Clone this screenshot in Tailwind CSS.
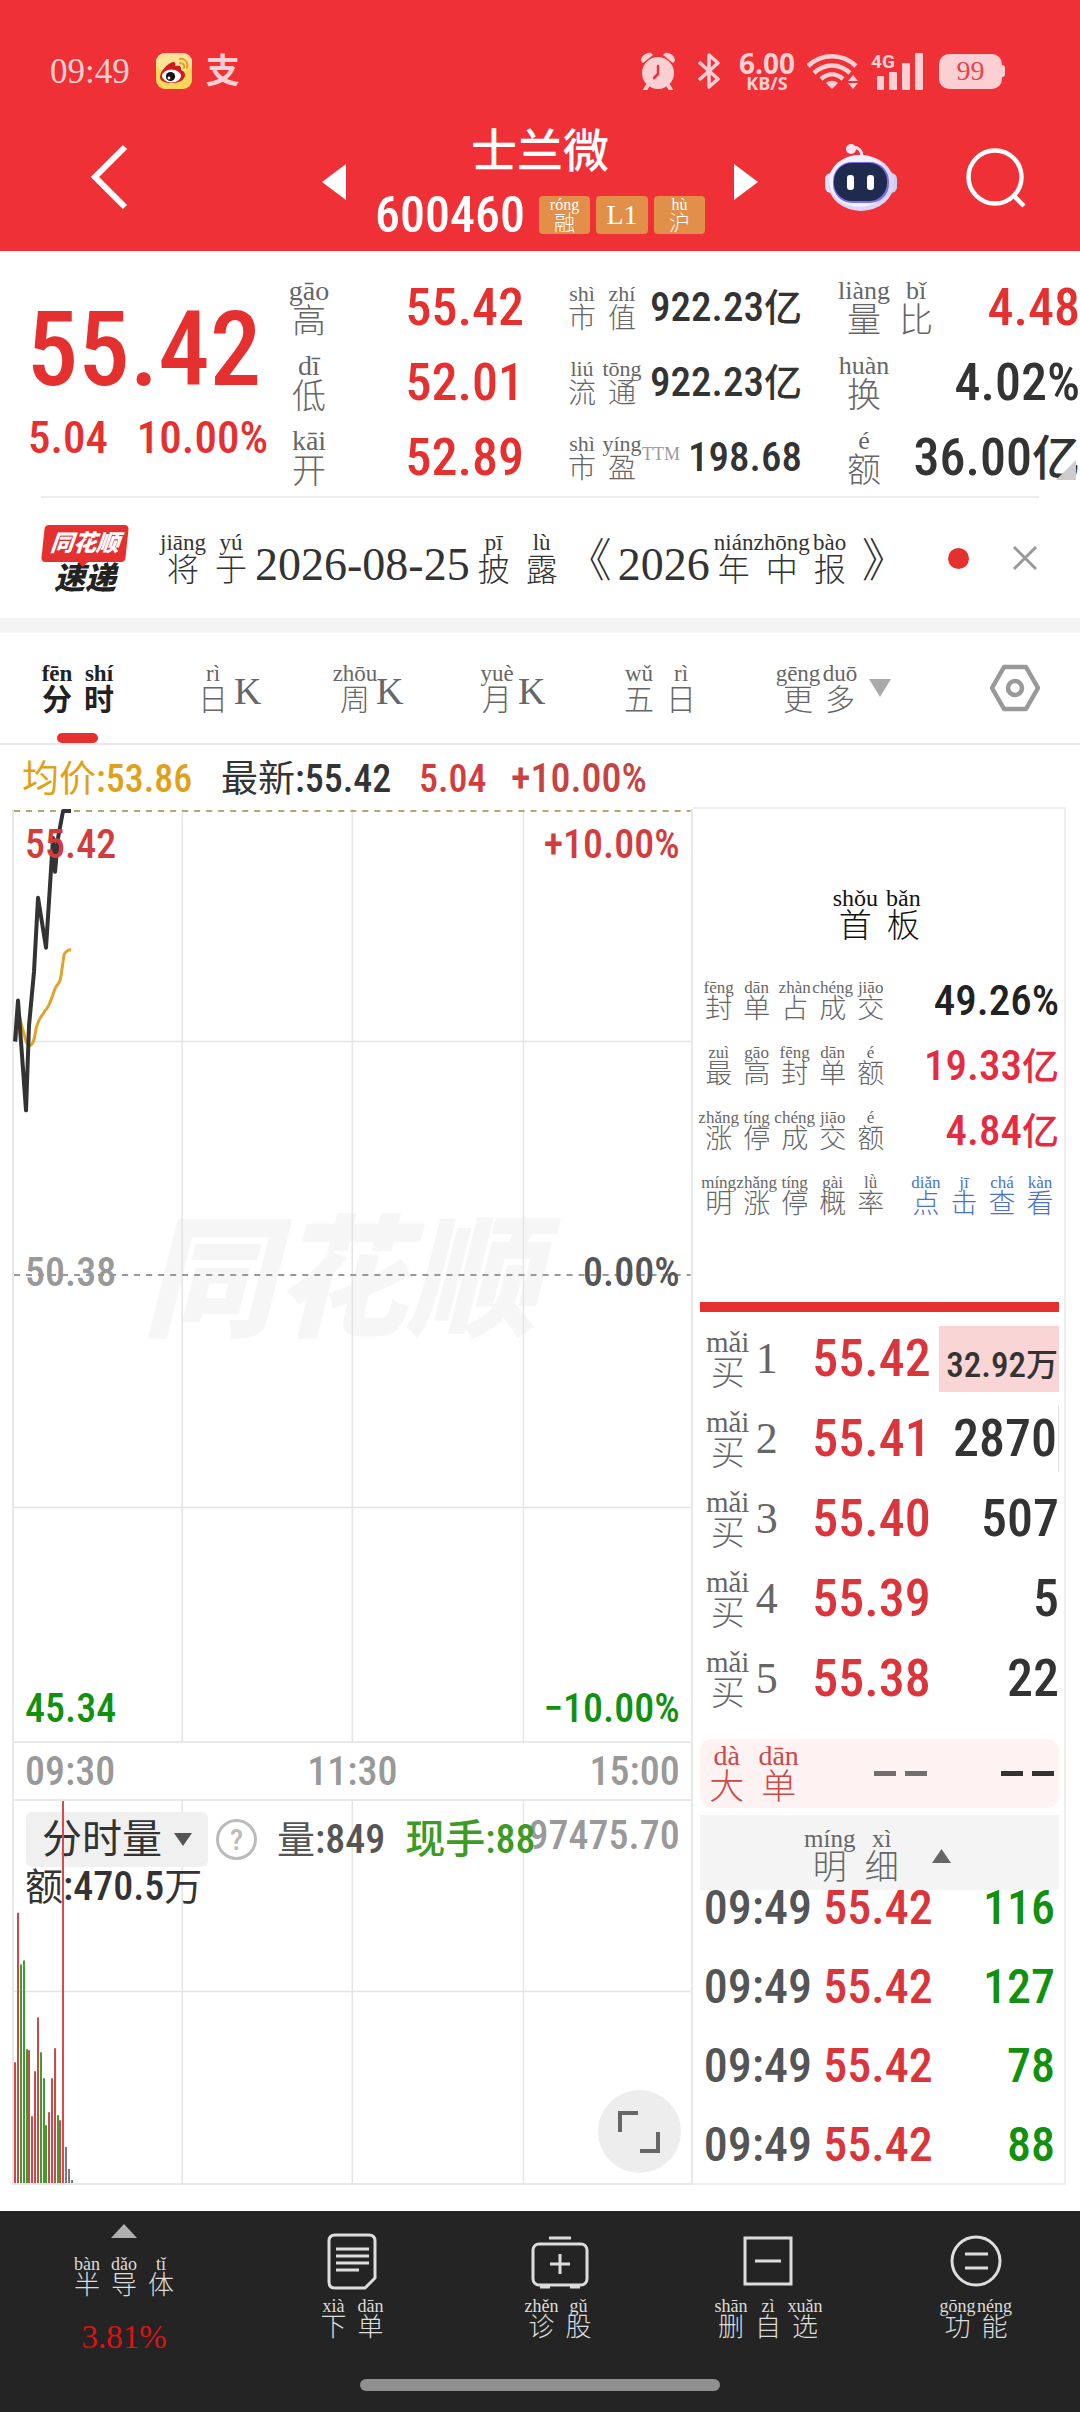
<!DOCTYPE html>
<html lang="zh-CN">
<head>
    <meta charset="UTF-8">
    <meta name="viewport" content="width=device-width, initial-scale=1.0">
    <title>士兰微 600460</title>
    <script src="https://cdn.jsdelivr.net/npm/@tailwindcss/browser@4"></script>
</head>
<body class="bg-white text-[#333] font-['Roboto_Condensed','Liberation_Sans_Narrow',Roboto,'Noto_Sans_CJK_SC',sans-serif] font-medium leading-none [&_ruby]:inline-flex [&_ruby]:flex-col-reverse [&_ruby]:items-center [&_ruby]:leading-none [&_ruby]:font-light [&_ruby]:font-['Liberation_Serif','Noto_Sans_CJK_SC',serif] [&_rt]:leading-none [&_rt]:whitespace-nowrap">

    <!-- 顶部 -->
    <header class="bg-[#f03037] text-white h-[251px]">
        <div class="flex items-center justify-between h-[142px] pl-[50px] pr-[75px] text-[#fcd0d2]">
            <div class="flex items-center">
                <span class="font-['Liberation_Serif',serif] font-light text-[35px]">09:49</span>
                <svg class="w-9 h-9 ml-[26px]" viewBox="0 0 36 36">
                    <rect width="36" height="36" rx="9" fill="#fdd75a"/>
                    <rect width="36" height="18" rx="9" fill="#fde39a"/>
                    <path d="M4 24c0-6 8-14 13-15 2 0 3 1 2 4 4-1 7 0 6 4 3 1 4 3 4 5 0 5-6 8-13 8S4 28 4 24z" fill="#d7191c"/>
                    <ellipse cx="15.500" cy="23" rx="9.500" ry="6.500" fill="#fff"/>
                    <circle cx="14.500" cy="23.500" r="4.600" fill="#111"/>
                    <circle cx="13" cy="25" r="1.400" fill="#fff"/>
                    <path d="M24 6c5-1 9 4 7 9M24 10c3 0 5 2 4 5" fill="none" stroke="#e89c1c" stroke-width="2" stroke-linecap="round"/>
                </svg>
                <span class="font-bold text-[34px] ml-[14px]">支</span>
            </div>
            <div class="flex items-center">
                <svg class="w-9 h-[38px]" viewBox="0 0 36 38" fill="currentColor">
                    <path d="M1 9C1 4 6 0 11 1L13 3 3 11zM35 9c0-5-5-9-10-8l-2 2 10 8z"/>
                    <circle cx="18" cy="21" r="16"/>
                    <path d="M8 33l-3 5M28 33l3 5" stroke="currentColor" stroke-width="4" stroke-linecap="round"/>
                    <path d="M18 14v8l-4 4" fill="none" stroke="#f03037" stroke-width="2.500" stroke-linecap="round"/>
                </svg>
                <svg class="w-[22px] h-9 ml-[22px]" viewBox="0 0 22 36" fill="none" stroke="currentColor" stroke-width="3.500" stroke-linejoin="round">
                    <path d="M1 9l19 17-9 8V2l9 8L1 27"/>
                </svg>
                <div class="flex flex-col items-center ml-[16px] w-[62px] font-['Open_Sans',sans-serif] font-bold">
                    <span class="text-[28px] leading-[24px]">6.00</span>
                    <span class="text-[18px] leading-[16px]">KB/S</span>
                </div>
                <svg class="w-[51px] h-[38px] ml-[9px]" viewBox="0 0 51 38" fill="none" stroke="currentColor" stroke-width="4.500">
                    <path d="M1 14c14-13 34-13 48 0M7 21c11-10 25-10 36 0M14 27c7-6 15-6 22 0"/>
                    <path d="M25 37l-6-6c3-3 9-3 12 0zM46 23l5 6h-10zM46 37l5-6h-10z" fill="currentColor" stroke="none"/>
                </svg>
                <svg class="w-[52px] h-[38px] ml-[13px]" viewBox="0 0 52 38" fill="currentColor">
                    <text x="0" y="16" font-family="Roboto" font-weight="700" font-size="19">4G</text>
                    <rect x="6" y="24" width="7" height="14" rx="1"/>
                    <rect x="18" y="20" width="8" height="18" rx="1"/>
                    <rect x="31" y="11" width="8" height="27" rx="1"/>
                    <rect x="44" y="1" width="8" height="37" rx="1"/>
                </svg>
                <div class="flex items-center ml-4">
                    <span class="flex items-center justify-center w-[63px] h-[35px] rounded-[10px] bg-[#fcd0d2] text-[#e0454b] font-['Liberation_Serif',serif] text-[28px]">99</span>
                    <span class="w-[3px] h-3 rounded-r bg-[#fcd0d2]"></span>
                </div>
            </div>
        </div>

        <div class="grid grid-cols-[310px_1fr_310px]">
            <div class="pl-[88px] pt-px">
                <button type="button" aria-label="返回" class="block">
                    <svg class="w-10 h-[68px]" viewBox="0 0 40 68" fill="none" stroke="#fff" stroke-width="6"><path d="M37 4L7 34l30 30"/></svg>
                </button>
            </div>
            <div class="flex items-center justify-between h-[112px] -mt-[16px] px-3">
                <button type="button" aria-label="上一只"><svg class="w-6 h-9" viewBox="0 0 24 36" fill="#fff"><path d="M24 0v36L0 18z"/></svg></button>
                <div class="flex flex-col items-center">
                    <h1 class="text-[46px] leading-[50px]">士兰微</h1>
                    <div class="flex items-center gap-[6px] h-[46px] mt-4">
                        <span class="text-[50px] mr-2">600460</span>
                        <span class="flex items-center justify-center w-[51px] h-[38px] rounded-sm bg-[#e28f49]"><ruby class="text-[21px]">融<rt class="text-[16px]">róng</rt></ruby></span>
                        <span class="flex items-center justify-center w-[52px] h-[38px] rounded-sm bg-[#e28f49] font-['Liberation_Serif',serif] text-[28px]">L1</span>
                        <span class="flex items-center justify-center w-[51px] h-[38px] rounded-sm bg-[#e28f49]"><ruby class="text-[21px]">沪<rt class="text-[16px]">hù</rt></ruby></span>
                    </div>
                </div>
                <button type="button" aria-label="下一只"><svg class="w-6 h-9" viewBox="0 0 24 36" fill="#fff"><path d="M0 0v36l24-18z"/></svg></button>
            </div>
            <div class="flex items-start justify-between pl-[54px] pr-[54px]">
                <button type="button" aria-label="智能助手">
                    <svg class="w-[74px] h-[70px]" viewBox="0 0 74 70">
                        <path d="M27 6c8-2 11 3 11 9" fill="none" stroke="#f6dfff" stroke-width="3"/>
                        <circle cx="27" cy="7" r="5" fill="#fbe6f4"/>
                        <rect x="1" y="31" width="12" height="20" rx="6" fill="#e4e2fb"/>
                        <rect x="61" y="31" width="12" height="20" rx="6" fill="#cfcdf7"/>
                        <ellipse cx="37" cy="41" rx="33" ry="28" fill="#d9d6f8"/>
                        <ellipse cx="35" cy="39" rx="30" ry="26" fill="#f3f1ff"/>
                        <rect x="9" y="20" width="56" height="41" rx="19" fill="#7a6cf0"/>
                        <rect x="10" y="21" width="53" height="38" rx="18" fill="#1e2a4e"/>
                        <rect x="23" y="33" width="7" height="15" rx="3" fill="#fff"/>
                        <rect x="43" y="33" width="7" height="15" rx="3" fill="#fff"/>
                    </svg>
                </button>
                <button type="button" aria-label="搜索" class="pt-[6px]">
                    <svg class="w-[60px] h-[60px]" viewBox="0 0 60 60" fill="none" stroke="#fff" stroke-width="4.500"><circle cx="29" cy="29" r="26.500"/><path d="M48 48l10 10"/></svg>
                </button>
            </div>
        </div>
    </header>

    <!-- 行情 -->
    <section class="relative grid grid-cols-[280fr_270fr_270fr_260fr] pt-[19px] h-[245px] text-[#333]">
        <div class="flex flex-col items-center text-[#e53030] pl-2 pt-[25px]">
            <strong class="text-[103px] leading-[110px] font-medium">55.42</strong>
            <p class="flex justify-between w-full pl-5 pr-3 mt-[6px] text-[45px] leading-[54px]"><span>5.04</span><span>10.00%</span></p>
        </div>
        <dl class="pl-2 pr-[26px] [&>div]:flex [&>div]:h-[75px] [&>div]:items-center [&>div]:justify-between [&_dt]:flex [&_dt]:text-[#666] [&_ruby]:text-[34px] [&_ruby]:w-[42px] [&_rt]:text-[28px] text-[52px] text-[#e53030]">
            <div><dt><ruby>高<rt>gāo</rt></ruby></dt><dd>55.42</dd></div>
            <div><dt><ruby>低<rt>dī</rt></ruby></dt><dd>52.01</dd></div>
            <div><dt><ruby>开<rt>kāi</rt></ruby></dt><dd>52.89</dd></div>
        </dl>
        <dl class="pl-3 pr-[18px] [&>div]:flex [&>div]:h-[75px] [&>div]:items-center [&>div]:justify-between [&_dt]:flex [&_dt]:text-[#666] [&_ruby]:text-[28px] [&_ruby]:w-10 [&_rt]:text-[22px] text-[41px]">
            <div><dt><ruby>市<rt>shì</rt></ruby><ruby>值<rt>zhí</rt></ruby></dt><dd class="whitespace-nowrap">922.23<span class="text-[38px]">亿</span></dd></div>
            <div><dt><ruby>流<rt>liú</rt></ruby><ruby>通<rt>tōng</rt></ruby></dt><dd class="whitespace-nowrap">922.23<span class="text-[38px]">亿</span></dd></div>
            <div><dt><ruby>市<rt>shì</rt></ruby><ruby>盈<rt>yíng</rt></ruby><sup class="top-0 pt-3 text-[18px] leading-none font-['Liberation_Serif',serif] text-[#999]">TTM</sup></dt><dd>198.68</dd></div>
        </dl>
        <dl class="pl-[18px] [&>div]:flex [&>div]:h-[75px] [&>div]:items-center [&>div]:justify-between [&_dt]:flex [&_dt]:text-[#666] [&_ruby]:text-[34px] [&_ruby]:w-[52px] [&_rt]:text-[26px] text-[52px]">
            <div><dt><ruby>量<rt>liàng</rt></ruby><ruby>比<rt>bǐ</rt></ruby></dt><dd class="text-[#e53030]">4.48</dd></div>
            <div><dt><ruby>换<rt>huàn</rt></ruby></dt><dd>4.02%</dd></div>
            <div><dt><ruby>额<rt>é</rt></ruby></dt><dd class="whitespace-nowrap">36.00<span class="text-[48px]">亿</span></dd></div>
        </dl>
        <svg class="absolute right-1 bottom-4 w-5 h-5" viewBox="0 0 20 20"><path d="M20 0v20H0z" fill="#ccc"/></svg>
    </section>

    <!-- 公告 -->
    <section class="flex items-center h-[122px] mx-[41px] border-t-2 border-[#eee] text-[#333]">
        <div class="flex flex-col items-center w-[88px] mt-1 italic font-black">
            <span class="relative flex items-center justify-center w-[84px] h-[37px] rounded-[4px] -skew-x-6 bg-[#e53030] text-white text-[23px]">同花顺<i class="absolute -bottom-[5px] w-0 h-0 border-x-[6px] border-x-transparent border-t-[6px] border-t-[#e53030]"></i></span>
            <span class="text-[31px] leading-[34px] text-[#222]">速递</span>
        </div>
        <a href="#" class="flex items-end ml-[30px] font-['Liberation_Serif','Noto_Sans_CJK_SC',serif] font-light text-[46px] [&_ruby]:text-[32px] [&_ruby]:w-12 [&_rt]:text-[23px]">
            <ruby>将<rt>jiāng</rt></ruby><ruby>于<rt>yú</rt></ruby><span class="leading-[42px]">2026-08-25</span><ruby>披<rt>pī</rt></ruby><ruby>露<rt>lù</rt></ruby><span class="leading-[50px] w-[48px]">《</span><span class="leading-[42px] pl-1">2026</span><ruby>年<rt>nián</rt></ruby><ruby>中<rt>zhōng</rt></ruby><ruby>报<rt>bào</rt></ruby><span class="leading-[50px] w-[54px] text-right">》</span>
        </a>
        <span class="w-[21px] h-[21px] rounded-full bg-[#e53030] ml-auto"></span>
        <button type="button" aria-label="关闭" class="ml-[42px]"><svg class="w-7 h-7" viewBox="0 0 28 28" stroke="#999" stroke-width="3"><path d="M3 3l22 22M25 3L3 25"/></svg></button>
    </section>
    <div class="h-[15px] bg-[#f4f4f4]"></div>

    <!-- 周期 -->
    <nav class="grid grid-cols-[156fr_142fr_142fr_142fr_159fr_213fr_50fr] h-[112px] pl-9 pr-10 border-b-2 border-[#e8e8e8] text-[#666] [&_button]:relative [&_button]:flex [&_button]:h-full [&_button]:items-center [&_ruby]:text-[30px] [&_ruby]:w-[42px] [&_rt]:text-[23px] [&_span]:font-['Liberation_Serif',serif] [&_span]:font-light [&_span]:text-[38px] [&_span]:mt-[6px]">
        <button type="button" class="text-[#222] [&_ruby]:font-bold!"><ruby>分<rt>fēn</rt></ruby><ruby>时<rt>shí</rt></ruby><i class="absolute bottom-0 left-[21px] w-[41px] h-[10px] rounded-full bg-[#e53030]"></i></button>
        <button type="button"><ruby>日<rt>rì</rt></ruby><span>K</span></button>
        <button type="button"><ruby>周<rt>zhōu</rt></ruby><span>K</span></button>
        <button type="button"><ruby>月<rt>yuè</rt></ruby><span>K</span></button>
        <button type="button"><ruby>五<rt>wǔ</rt></ruby><ruby>日<rt>rì</rt></ruby></button>
        <button type="button"><ruby>更<rt>gēng</rt></ruby><ruby>多<rt>duō</rt></ruby><svg class="w-[22px] h-[18px] ml-2" viewBox="0 0 22 18" fill="#aaa"><path d="M0 0h22L11 18z"/></svg></button>
        <button type="button" aria-label="设置"><svg class="w-[50px] h-[50px]" viewBox="0 0 50 50" fill="none" stroke="#999" stroke-width="4.500" stroke-linejoin="round"><path d="M14 4h22l12 21-12 21H14L2 25z"/><circle cx="25" cy="25" r="7"/></svg></button>
    </nav>

    <p class="flex items-center h-[64px] pt-1 pl-[22px] text-[38px] [&>span]:whitespace-nowrap">
        <span class="w-[199px] text-[#dfa11c]"><span class="text-[37px] font-normal">均价</span>:53.86</span>
        <span class="w-[198px]"><span class="text-[37px] font-normal">最新</span>:55.42</span>
        <span class="w-[92px] text-[#d33c3c]">5.04</span>
        <span class="text-[40px] text-[#c94242]">+10.00%</span>
    </p>

    <main class="grid grid-cols-[680fr_373fr] pl-3 pr-[14px]">
        <!-- 分时图 -->
        <section class="border-x-2 border-[#e8e8e8]">
            <div class="relative h-[934px] border-b-2 border-[#e8e8e8] text-[40px]">
                <div class="absolute inset-0 flex items-center justify-center pr-6 pt-3 text-[132px] font-black italic text-[#f6f6f6]">同花顺</div>
                <svg class="absolute inset-0 w-full h-full overflow-visible" viewBox="0 0 676 934" preserveAspectRatio="none" fill="none">
                    <path d="M168 0v934M338 0v934M509 0v934M0 233h676M0 700h676" stroke="#e4e4e4" stroke-width="1.500"/>
                    <path d="M0 2h676" stroke="#b5a86c" stroke-width="2" stroke-dasharray="6 6"/>
                    <path d="M0 467h676" stroke="#999" stroke-width="2" stroke-dasharray="6 6"/>
                    <path d="M2 233l3-28c2 10 3 14 5 20 2 8 3 12 6 12 4-1 5-10 6-17 3-12 5-10 9-18 4-2 7-14 10-22 4-8 5-4 6-13l3-21c2-4 4-5 7-5" stroke="#e0a32c" stroke-width="3"/>
                    <path d="M1 233l3-41 8 110 3-85 5-54 4-74 8 50 7-110 2 34 3-34 5-27h8" stroke="#333" stroke-width="4" stroke-linejoin="round"/>
                </svg>
                <span class="absolute left-[11px] top-[16px] text-[#d33c3c]">55.42</span>
                <span class="absolute right-[11px] top-[16px] text-[#d33c3c]">+10.00%</span>
                <span class="absolute left-[11px] top-[444px] text-[#999]">50.38</span>
                <span class="absolute right-[11px] top-[444px] text-[#555]">0.00%</span>
                <span class="absolute left-[11px] bottom-[12px] text-[#12900f]">45.34</span>
                <span class="absolute right-[11px] bottom-[12px] text-[#12900f]">−10.00%</span>
            </div>
            <div class="flex items-center justify-between h-[56px] pt-[2px] px-[11px] text-[40px] text-[#999]"><span>09:30</span><span>11:30</span><span>15:00</span></div>
            <!-- 分时量 -->
            <div class="relative h-[386px] border-y-2 border-[#e8e8e8] text-[40px]">
                <svg class="absolute inset-0 w-full h-full" viewBox="0 0 676 383" preserveAspectRatio="none" fill="none">
                    <path d="M168 0v383M338 0v383M509 0v383M0 191h676" stroke="#e4e4e4" stroke-width="1.500"/>
                    <g stroke-width="2">
                        <path d="M1 383V262M4 383V112M15 383V250M18 383V316M21 383V271M24 383V217M35 383V312M38 383V278M41 383V248M46 383V320" stroke="#c84a4a"/>
                        <path d="M7 383V164M10 383V160M13 383V249M27 383V252M30 383V278M32 383V325M44 383V315" stroke="#3f9d2f"/>
                        <path d="M52 383v-36M55 383v-14M58 383v-3" stroke="#777"/>
                    </g>
                </svg>
                <span class="absolute right-[11px] top-[15px] text-[#999]">97475.70</span>
                <div class="relative flex items-center pl-3 pt-[11px] whitespace-nowrap">
                    <button type="button" class="flex items-center justify-between w-[182px] h-[55px] pl-4 pr-4 rounded-md bg-[#f0f0f0] text-[40px] font-normal">分时量<svg class="w-[18px] h-[13px]" viewBox="0 0 18 13" fill="#555"><path d="M0 0h18L9 13z"/></svg></button>
                    <button type="button" aria-label="说明" class="flex items-center justify-center w-[41px] h-[41px] ml-2 rounded-full border-3 border-[#bbb] text-[30px] text-[#bbb]">?</button>
                    <span class="ml-5 text-[#555]"><span class="font-normal text-[38px]">量</span>:849</span>
                    <span class="ml-5 text-[#3c9a25]">现手:88</span>
                </div>
                <p class="relative pl-[11px] pt-px leading-[38px]"><span class="font-normal text-[38px]">额</span>:470.5<span class="font-normal text-[38px]">万</span></p>
                <svg class="absolute left-[48px] inset-y-0 w-[2px] h-full" viewBox="0 0 2 10" preserveAspectRatio="none"><path d="M1 0v10" stroke="#d94a4a" stroke-width="2"/></svg>
                <button type="button" aria-label="全屏" class="absolute right-[10px] bottom-[10px] flex items-center justify-center w-[83px] h-[83px] rounded-full bg-[#ededed]">
                    <svg class="w-11 h-11" viewBox="0 0 44 44" fill="none" stroke="#666" stroke-width="4"><path d="M3 22V3h18M41 22v19H23"/></svg>
                </button>
            </div>
        </section>

        <!-- 盘口 -->
        <aside class="border-y-2 border-r-2 border-[#eee] -mt-[2px] pl-[7px] pr-[5px]">
            <h2 class="flex justify-center pt-[77px] text-[#111] [&_ruby]:text-[33px] [&_ruby]:w-12 [&_rt]:text-[24px]"><ruby>首<rt>shǒu</rt></ruby><ruby>板<rt>bǎn</rt></ruby></h2>
            <dl class="mt-[25px] [&>div]:flex [&>div]:items-center [&>div]:justify-between [&>div]:h-[65px] [&_dt]:flex [&_dt]:text-[#666] [&_ruby]:text-[27px] [&_ruby]:w-[38px] [&_rt]:text-[17px] text-[43px] text-[#e52b42] whitespace-nowrap">
                <div><dt><ruby>封<rt>fēng</rt></ruby><ruby>单<rt>dān</rt></ruby><ruby>占<rt>zhàn</rt></ruby><ruby>成<rt>chéng</rt></ruby><ruby>交<rt>jiāo</rt></ruby></dt><dd class="text-[#222]">49.26%</dd></div>
                <div><dt><ruby>最<rt>zuì</rt></ruby><ruby>高<rt>gāo</rt></ruby><ruby>封<rt>fēng</rt></ruby><ruby>单<rt>dān</rt></ruby><ruby>额<rt>é</rt></ruby></dt><dd>19.33<span class="text-[37px]">亿</span></dd></div>
                <div><dt><ruby>涨<rt>zhǎng</rt></ruby><ruby>停<rt>tíng</rt></ruby><ruby>成<rt>chéng</rt></ruby><ruby>交<rt>jiāo</rt></ruby><ruby>额<rt>é</rt></ruby></dt><dd>4.84<span class="text-[37px]">亿</span></dd></div>
                <div><dt><ruby>明<rt>míng</rt></ruby><ruby>涨<rt>zhǎng</rt></ruby><ruby>停<rt>tíng</rt></ruby><ruby>概<rt>gài</rt></ruby><ruby>率<rt>lǜ</rt></ruby></dt><dd><a href="#" class="flex text-[#4a72cc]"><ruby>点<rt>diǎn</rt></ruby><ruby>击<rt>jī</rt></ruby><ruby>查<rt>chá</rt></ruby><ruby>看<rt>kàn</rt></ruby></a></dd></div>
            </dl>
            <div class="h-[10px] mt-[74px] bg-[#e53030]"></div>

            <table class="w-full table-fixed border-separate border-spacing-x-0 border-spacing-y-[14px] text-[52px] [&_tr]:h-[66px] [&_td]:p-0 [&_th]:p-0 [&_td]:text-right [&_th]:font-light [&_th]:text-[#666] [&_ruby]:text-[34px] [&_ruby]:w-[56px] [&_rt]:text-[29px] [&_th>div]:flex [&_th>div]:items-center [&_th>div]:font-['Liberation_Serif',serif] [&_th>div]:text-[44px]">
                <tbody>
                    <tr><th class="w-[84px]"><div><ruby>买<rt>mǎi</rt></ruby>1</div></th><td class="w-[147px] text-[#d9353a]">55.42</td><td><div class="flex items-center justify-end h-[66px] ml-2 pt-3 pr-px bg-[#f9d5d5] text-[35px]">32.92<span class="text-[32px]">万</span></div></td></tr>
                    <tr><th><div><ruby>买<rt>mǎi</rt></ruby>2</div></th><td class="text-[#d9353a]">55.41</td><td><div class="flex items-center justify-end h-[66px] pr-px border-r border-[#ddd]">2870</div></td></tr>
                    <tr><th><div><ruby>买<rt>mǎi</rt></ruby>3</div></th><td class="text-[#d9353a]">55.40</td><td>507</td></tr>
                    <tr><th><div><ruby>买<rt>mǎi</rt></ruby>4</div></th><td class="text-[#d9353a]">55.39</td><td>5</td></tr>
                    <tr><th><div><ruby>买<rt>mǎi</rt></ruby>5</div></th><td class="text-[#d9353a]">55.38</td><td>22</td></tr>
                </tbody>
            </table>

            <div class="flex items-center h-[69px] mt-[13px] rounded-xl bg-[#fef2f2] text-[#cc4a45] [&_ruby]:text-[35px] [&_ruby]:w-[52px] [&_rt]:text-[28px]">
                <ruby class="ml-px">大<rt>dà</rt></ruby><ruby>单<rt>dān</rt></ruby>
                <svg class="w-[54px] h-[5px] ml-auto" viewBox="0 0 54 5" fill="#707070"><path d="M0 0h22v5H0zM31 0h22v5H31z"/></svg>
                <svg class="w-[54px] h-[5px] ml-[73px] mr-1" viewBox="0 0 54 5" fill="#333"><path d="M0 0h22v5H0zM31 0h22v5H31z"/></svg>
            </div>
            <button type="button" class="flex items-center justify-center w-full h-[75px] pt-[6px] pr-1 mt-[7px] bg-[#f4f4f4] text-[#666] [&_ruby]:text-[34px] [&_ruby]:w-[52px] [&_rt]:text-[25px]">
                <ruby>明<rt>míng</rt></ruby><ruby>细<rt>xì</rt></ruby>
                <svg class="w-[19px] h-[14px] ml-6" viewBox="0 0 19 14" fill="#666"><path d="M0 14h19L9.500 0z"/></svg>
            </button>
            <table class="w-full table-fixed text-[48px] leading-[36px] [&_td]:p-0 [&_td]:pb-[43px] [&_tr:last-child>td]:pb-4">
                <tbody>
                    <tr><td class="w-[114px] text-[#555]"><span class="pl-1">09:49</span></td><td class="w-[119px] text-right text-[#d9353a]">55.42</td><td class="text-right text-[#12900f]"><span class="pr-1">116</span></td></tr>
                    <tr><td class="text-[#555]"><span class="pl-1">09:49</span></td><td class="text-right text-[#d9353a]">55.42</td><td class="text-right text-[#12900f]"><span class="pr-1">127</span></td></tr>
                    <tr><td class="text-[#555]"><span class="pl-1">09:49</span></td><td class="text-right text-[#d9353a]">55.42</td><td class="text-right text-[#12900f]"><span class="pr-1">78</span></td></tr>
                    <tr><td class="text-[#555]"><span class="pl-1">09:49</span></td><td class="text-right text-[#d9353a]">55.42</td><td class="text-right text-[#12900f]"><span class="pr-1">88</span></td></tr>
                </tbody>
            </table>
        </aside>
    </main>

    <!-- 底部 -->
    <footer class="h-[201px] mt-[26px] bg-[#242424] text-[#ddd]">
        <nav class="grid grid-cols-[248fr_208fr_208fr_208fr_208fr] h-[168px] [&>a]:flex [&>a]:flex-col [&>a]:items-center [&_span]:flex [&_ruby]:text-[26px] [&_ruby]:w-[37px] [&_rt]:text-[18px]">
            <a href="#" class="pt-[13px]">
                <svg class="w-[26px] h-[14px]" viewBox="0 0 26 14" fill="#b0b0b0"><path d="M0 14h26L13 0z"/></svg>
                <span class="mt-[17px]"><ruby>半<rt>bàn</rt></ruby><ruby>导<rt>dǎo</rt></ruby><ruby>体<rt>tǐ</rt></ruby></span>
                <b class="mt-[22px] font-['Liberation_Serif',serif] font-normal text-[33px] text-[#d81414]">3.81%</b>
            </a>
            <a href="#" class="pt-[22px]">
                <svg class="w-[50px] h-[57px]" viewBox="0 0 50 57" fill="none" stroke="currentColor" stroke-width="3"><path d="M8 2h34q6 0 6 6v37L38 55H8q-6 0-6-6V8q0-6 6-6z"/><path d="M9 16h33M9 23h33M9 30h33M9 37h23"/></svg>
                <span class="mt-[7px]"><ruby>下<rt>xià</rt></ruby><ruby>单<rt>dān</rt></ruby></span>
            </a>
            <a href="#" class="pt-[22px]">
                <svg class="w-[58px] h-[57px]" viewBox="0 0 58 57" fill="none" stroke="currentColor" stroke-width="3"><rect x="2" y="11" width="54" height="41" rx="6"/><path d="M18 5h22M29 21v20M19 31h20M9 54h10M39 54h10"/></svg>
                <span class="mt-[7px]"><ruby>诊<rt>zhěn</rt></ruby><ruby>股<rt>gǔ</rt></ruby></span>
            </a>
            <a href="#" class="pt-[22px]">
                <svg class="w-[50px] h-[57px]" viewBox="0 0 50 57" fill="none" stroke="currentColor" stroke-width="3"><rect x="2" y="5" width="46" height="46"/><path d="M12 28h26"/></svg>
                <span class="mt-[7px]"><ruby>删<rt>shān</rt></ruby><ruby>自<rt>zì</rt></ruby><ruby>选<rt>xuǎn</rt></ruby></span>
            </a>
            <a href="#" class="pt-[22px]">
                <svg class="w-[52px] h-[57px]" viewBox="0 0 52 57" fill="none" stroke="currentColor" stroke-width="3"><circle cx="26" cy="28" r="24"/><path d="M15 21h23M15 35h23"/></svg>
                <span class="mt-[7px]"><ruby>功<rt>gōng</rt></ruby><ruby>能<rt>néng</rt></ruby></span>
            </a>
        </nav>
        <div class="w-1/3 h-3 mx-auto rounded-full bg-[#909090]"></div>
    </footer>
</body>
</html>
